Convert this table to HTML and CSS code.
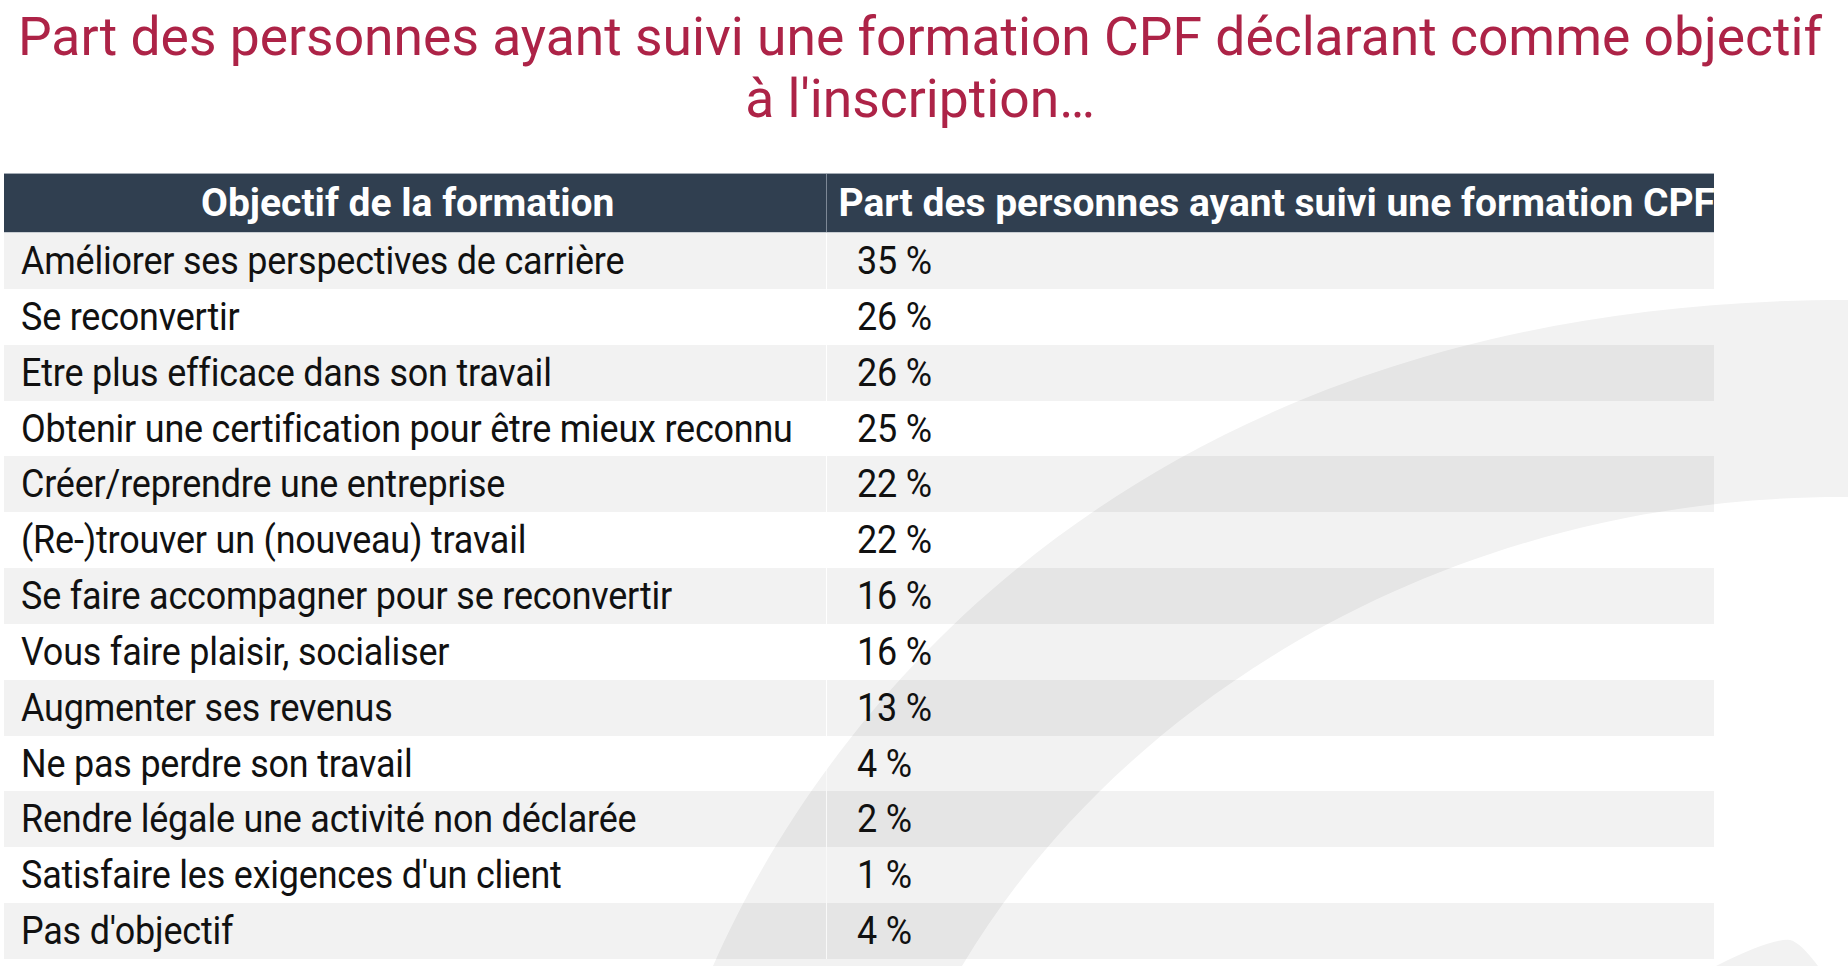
FILE: index.html
```html
<!DOCTYPE html>
<html lang="fr">
<head>
<meta charset="utf-8">
<title>Objectifs CPF</title>
<link rel="stylesheet" href="styles.css">
</head>
<body>
<div class="page">
  <svg class="watermark" width="1848" height="966" viewBox="0 0 1848 966" aria-hidden="true">
    <path d="M713,966 C830,700 1150,300 1848,300 L1848,497 C1450,495 1120,700 962,966 Z" fill="#f2f2f2"/>
    <path d="M1716,966 Q1772,938 1790,940 Q1800,942 1818,966 Z" fill="#f2f2f2"/>
  </svg>
  <h1 class="title">Part des personnes ayant suivi une formation CPF déclarant comme objectif<br>à l'inscription…</h1>
  <table class="data">
    <colgroup><col class="c1"><col class="c2"></colgroup>
    <thead>
      <tr><th class="h1">Objectif de la formation</th><th class="h2">Part des personnes ayant suivi une formation CPF</th></tr>
    </thead>
    <tbody>
      <tr><td><span class="txt">Améliorer ses perspectives de carrière</span></td><td><span class="txt">35 %</span></td></tr>
      <tr><td><span class="txt">Se reconvertir</span></td><td><span class="txt">26 %</span></td></tr>
      <tr><td><span class="txt">Etre plus efficace dans son travail</span></td><td><span class="txt">26 %</span></td></tr>
      <tr><td><span class="txt">Obtenir une certification pour être mieux reconnu</span></td><td><span class="txt">25 %</span></td></tr>
      <tr><td><span class="txt">Créer/reprendre une entreprise</span></td><td><span class="txt">22 %</span></td></tr>
      <tr><td><span class="txt">(Re-)trouver un (nouveau) travail</span></td><td><span class="txt">22 %</span></td></tr>
      <tr><td><span class="txt">Se faire accompagner pour se reconvertir</span></td><td><span class="txt">16 %</span></td></tr>
      <tr><td><span class="txt">Vous faire plaisir, socialiser</span></td><td><span class="txt">16 %</span></td></tr>
      <tr><td><span class="txt">Augmenter ses revenus</span></td><td><span class="txt">13 %</span></td></tr>
      <tr><td><span class="txt">Ne pas perdre son travail</span></td><td><span class="txt">4 %</span></td></tr>
      <tr><td><span class="txt">Rendre légale une activité non déclarée</span></td><td><span class="txt">2 %</span></td></tr>
      <tr><td><span class="txt">Satisfaire les exigences d'un client</span></td><td><span class="txt">1 %</span></td></tr>
      <tr><td><span class="txt">Pas d'objectif</span></td><td><span class="txt">4 %</span></td></tr>
    </tbody>
  </table>
</div>
</body>
</html>
```
FILE: styles.css
```css
html, body {
  margin: 0;
  padding: 0;
  background: #ffffff;
}
body {
  font-family: Roboto, "Noto Sans", "Liberation Sans", sans-serif;
  color: #111111;
}
.page {
  position: relative;
  width: 1848px;
  height: 966px;
  overflow: hidden;
}
.watermark {
  position: absolute;
  left: 0;
  top: 0;
  z-index: 0;
}
.title {
  position: relative;
  z-index: 1;
  margin: 6px 0 0 0;
  padding: 0 8px 0 0;
  font-size: 53.4px;
  line-height: 62px;
  font-weight: 400;
  color: #ad2347;
  text-align: center;
  white-space: nowrap;
}
.data {
  position: relative;
  z-index: 1;
  margin: 43px 0 0 4px;
  width: 1710px;
  border-collapse: collapse;
  table-layout: fixed;
}
.c1 { width: 822px; }
.c2 { width: 888px; }
.data th {
  height: 58px;
  padding: 0;
  background: #303f50;
  color: #ffffff;
  font-size: 39px;
  font-weight: 700;
  line-height: 58px;
  white-space: nowrap;
  overflow: hidden;
  border-top: 1px solid #a3abb4;
  border-bottom: 1px solid #c9ced3;
}
.data th.h1 {
  text-align: center;
  padding-right: 14px;
}
.data th.h2 {
  text-align: left;
  padding-left: 12px;
  border-left: 1px solid #7d8896;
}
.data td {
  height: 55.85px;
  padding: 0;
  font-size: 38px;
  letter-spacing: -0.2px;
  line-height: 55.85px;
  white-space: nowrap;
  overflow: hidden;
}
.txt {
  display: inline-block;
  transform: scaleX(0.945);
  transform-origin: left center;
  position: relative;
  top: 1px;
}
.data td:first-child {
  padding-left: 17px;
}
.data td:last-child {
  padding-left: 30px;
  border-left: 1px solid rgba(255, 255, 255, 0.55);
}
.data tbody tr:nth-child(odd) td {
  background: rgba(0, 0, 0, 0.05);
}
```
